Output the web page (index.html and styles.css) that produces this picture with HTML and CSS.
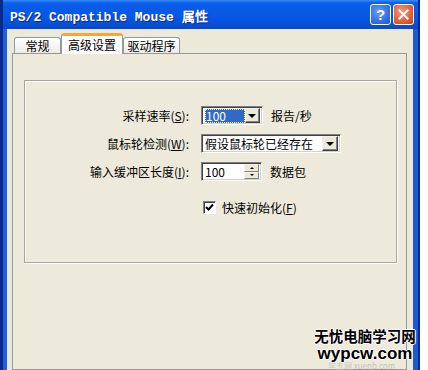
FILE: index.html
```html
<!DOCTYPE html>
<html lang="zh-CN">
<head>
    <meta charset="UTF-8">
    <meta name="viewport" content="width=device-width, initial-scale=1.0">
    <title>PS/2 Compatible Mouse 属性</title>
    <link rel="stylesheet" href="styles.css">
</head>
<body>
    <div class="screen">
        <div class="window">
            <div class="titlebar">
                <span class="title">PS/2 Compatible Mouse 属性</span>
                <div class="caption-btns">
                    <span class="cap-btn help">?</span>
                    <span class="cap-btn close">
                        <svg width="11" height="11" viewBox="0 0 11 11"><path d="M1.5 1.5 L9.5 9.5 M9.5 1.5 L1.5 9.5" stroke="#fff" stroke-width="2" stroke-linecap="square"/></svg>
                    </span>
                </div>
            </div>
            <div class="client">
                <div class="tabs">
                    <div class="tab tab-general">常规</div>
                    <div class="tab tab-adv active">高级设置</div>
                    <div class="tab tab-driver">驱动程序</div>
                </div>
                <div class="page">
                    <div class="group">
                        <div class="row">
                            <span class="lbl">采样速率(<u>S</u>):</span>
                            <div class="combo combo-short">
                                <span class="val sel">100</span>
                                <span class="drop"><i class="tri"></i></span>
                            </div>
                            <span class="unit">报告/秒</span>
                        </div>
                        <div class="row">
                            <span class="lbl">鼠标轮检测(<u>W</u>):</span>
                            <div class="combo combo-long">
                                <span class="val">假设鼠标轮已经存在</span>
                                <span class="drop"><i class="tri"></i></span>
                            </div>
                        </div>
                        <div class="row">
                            <span class="lbl">输入缓冲区长度(<u>I</u>):</span>
                            <div class="combo spin">
                                <span class="val">100</span>
                                <span class="spin-btns">
                                    <span class="spin-btn"><i class="tri up"></i></span>
                                    <span class="spin-btn"><i class="tri small"></i></span>
                                </span>
                            </div>
                            <span class="unit">数据包</span>
                        </div>
                        <div class="row row-check">
                            <span class="lbl"></span>
                            <span class="checkbox">
                                <svg width="9" height="9" viewBox="0 0 9 9"><path d="M1 4 L3.5 6.5 L8 1.5" fill="none" stroke="#000" stroke-width="2"/></svg>
                            </span>
                            <span class="check-text">快速初始化(<u>F</u>)</span>
                        </div>
                    </div>
                </div>
            </div>
        </div>
        <div class="watermark">
            <div class="wm-cn">无忧电脑学习网</div>
            <div class="wm-en">wypcw.com</div>
        </div>
        <div class="wm-faint">学五网 xuenb.com</div>
    </div>
</body>
</html>
```

FILE: styles.css
```css
body{
    margin: 0;
    background: #fff;
    font-family: "Noto Sans CJK SC", "Liberation Sans", sans-serif;
    font-size: 12px;
    color: #000;
}
.screen{
    position: relative;
    width: 428px;
    height: 370px;
    overflow: hidden;
    background: #fff;
}
.window{
    width: 420px;
    height: 370px;
    box-sizing: border-box;
    border-left: 3px solid #0a2a8a;
    border-right: 2px solid #0a2a8a;
    display: flex;
    flex-direction: column;
    background: #0b4fd8;
}
.titlebar{
    height: 29px;
    display: flex;
    align-items: center;
    justify-content: space-between;
    padding: 0 4px 0 7px;
    background: linear-gradient(#3b8cf6 0, #0a5ee8 3px, #0658e6 14px, #0551d8 24px, #0a48c8 29px);
}
.title{
    font-family: "Liberation Mono", monospace;
    font-weight: bold;
    font-size: 13px;
    color: #fff;
    text-shadow: 1px 1px #0c2a80;
    padding-top: 1px;
}
.caption-btns{
    display: flex;
    gap: 2px;
}
.cap-btn{
    width: 19px;
    height: 19px;
    border: 1px solid #fff;
    border-radius: 3px;
    display: flex;
    align-items: center;
    justify-content: center;
    color: #fff;
    font-family: "Liberation Sans", sans-serif;
    font-weight: bold;
    font-size: 15px;
}
.help{
    background: radial-gradient(circle at 40% 35%, #6a9ef6, #2d68e0 70%, #1f55cc);
}
.close{
    background: radial-gradient(circle at 40% 35%, #f39a7c, #e05a30 65%, #c8401c);
}
.client{
    flex: 1;
    display: flex;
    flex-direction: column;
    background: #ece9d8;
    border-left: 4px solid #1d62e0;
    border-right: 5px solid #1a5ad6;
    padding-top: 4px;
}
.tabs{
    display: flex;
    align-items: flex-end;
    height: 20px;
    padding-left: 7px;
    position: relative;
    z-index: 1;
}
.tab{
    height: 16px;
    box-sizing: border-box;
    border: 1px solid #919b9c;
    border-bottom: none;
    border-radius: 3px 3px 0 0;
    background: linear-gradient(#fff, #ecebe6);
    text-align: center;
    line-height: 16px;
}
.tab-general{ width: 47px; }
.tab-adv{ width: 62px; }
.tab-driver{ width: 57px; }
.tab.active{
    height: 21px;
    margin-bottom: -1px;
    background: #fcfcfe;
    border-top: 3px solid #f3a83a;
    line-height: 17px;
}
.page{
    flex: 1;
    margin: 0 6px 0 5px;
    border: 1px solid #919b9c;
    background: #edeadb;
}
.group{
    margin: 26px 9px 0 11px;
    height: 156px;
    border: 1px solid #a9a898;
    box-shadow: inset 1px 1px #fff, 1px 1px #fff;
    padding-top: 25px;
}
.row{
    display: flex;
    align-items: center;
    height: 19px;
    margin-bottom: 9px;
}
.lbl{
    width: 164px;
    text-align: right;
    margin-right: 12px;
}
.unit{
    margin-left: 8px;
}
.combo{
    height: 19px;
    box-sizing: border-box;
    display: flex;
    align-items: center;
    justify-content: space-between;
    background: #fff;
    border: 1px solid;
    border-color: #808080 #fff #fff #808080;
    box-shadow: inset 1px 1px #404040, inset -1px -1px #d4d0c8;
    padding: 2px 2px 2px 3px;
}
.combo-short{ width: 62px; }
.combo-long{ width: 140px; }
.spin{ width: 61px; }
.val{
    line-height: 14px;
}
.val.sel{
    background: #316ac5;
    color: #fff;
    width: 40px;
    outline: 1px dotted #ffe;
    outline-offset: -1px;
    padding-left: 1px;
}
.drop{
    width: 16px;
    height: 15px;
    box-sizing: border-box;
    background: #ece9d8;
    border: 1px solid;
    border-color: #f4f2ea #404040 #404040 #f4f2ea;
    box-shadow: inset -1px -1px #808080;
    display: flex;
    align-items: center;
    justify-content: center;
}
.tri{
    width: 0;
    height: 0;
    border-left: 4px solid transparent;
    border-right: 4px solid transparent;
    border-top: 4px solid #000;
}
.tri.up{
    border-top: none;
    border-bottom: 2px solid #000;
    border-left-width: 2px;
    border-right-width: 2px;
}
.tri.small{
    border-top-width: 2px;
    border-left-width: 2px;
    border-right-width: 2px;
}
.spin-btns{
    display: flex;
    flex-direction: column;
    width: 15px;
    height: 15px;
}
.spin-btn{
    flex: 1;
    background: #ece9d8;
    border: 1px solid;
    border-color: #f4f2ea #808080 #808080 #f4f2ea;
    display: flex;
    align-items: center;
    justify-content: center;
}
.row-check{
    margin-top: 17px;
}
.checkbox{
    width: 11px;
    height: 11px;
    background: #fff;
    border: 1px solid;
    border-color: #808080 #fff #fff #808080;
    box-shadow: inset 1px 1px #404040;
    display: flex;
    align-items: center;
    justify-content: center;
    margin-left: 2px;
}
.check-text{
    margin-left: 6px;
}
.watermark{
    position: absolute;
    left: 310px;
    top: 328px;
    width: 110px;
    text-align: center;
}
.wm-cn{
    font-weight: bold;
    font-size: 14.5px;
    line-height: 16px;
    height: 16px;
    margin-bottom: 2px;
    color: #000;
    text-shadow: -1px 0 #fff, 1px 0 #fff, 0 -1px #fff, 0 1px #fff;
}
.wm-en{
    font-family: "Liberation Sans", sans-serif;
    font-weight: bold;
    font-size: 17px;
    line-height: 15px;
    height: 15px;
    color: #000;
    text-shadow: -1px 0 #fff, 1px 0 #fff, 0 -1px #fff, 0 1px #fff;
}
.wm-faint{
    position: absolute;
    left: 328px;
    top: 362px;
    font-size: 8px;
    line-height: 8px;
    color: #c4c4c4;
    white-space: nowrap;
}
```
